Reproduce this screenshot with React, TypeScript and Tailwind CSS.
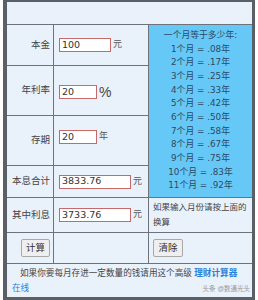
import React from 'react';

const cjk = "font-['Liberation_Sans','Noto_Sans_CJK_SC',sans-serif]";

const rates = ['.08', '.17', '.25', '.33', '.42', '.50', '.58', '.67', '.75', '.83', '.92'];

function Field({ value, width, unit, big }: { value: string; width: string; unit: string; big?: boolean }) {
  return (
    <div className="flex items-center gap-[2px] pl-[5px]">
      <input
        readOnly
        value={value}
        className={`${width} h-[14px] border border-[#c46a6a] bg-white pl-[2px] text-[9.5px] text-[#333] outline-none font-['DejaVu_Sans',sans-serif]`}
      />
      <span className={big ? 'text-[14px] leading-none text-[#444]' : 'text-[9px] text-[#555]'}>{unit}</span>
    </div>
  );
}

function Label({ children }: { children: React.ReactNode }) {
  return <div className="flex items-center justify-end bg-[#e9f1fb] pr-[3px] text-[9.5px] text-[#444]">{children}</div>;
}

export default function App() {
  return (
    <div className={`h-[300px] w-[258px] bg-white px-[3px] ${cjk}`}>
      <div className="border-b-[3px] border-l-4 border-r-[3px] border-t-2 border-[#5b5f66]">
        <div className="grid grid-cols-[46px_94px_1fr] grid-rows-[22px_40px_49px_49px_31px_34px_30px_33px] gap-px bg-[#6e737b]">
          <div className="col-span-3 bg-[#e9f1fb]" />

          <Label>本金</Label>
          <div className="flex items-center bg-[#e9f1fb]">
            <Field value="100" width="w-[52px]" unit="元" />
          </div>
          <div className="row-span-4 bg-[#66c8f6] pt-[4px] text-center font-['DejaVu_Sans','Noto_Sans_CJK_SC',sans-serif] text-[8.8px] leading-[13.65px] text-[#2c4a66]">
            <div>一个月等于多少年:</div>
            {rates.map((r, i) => (
              <div key={i}>
                {i + 1}个月 = {r}年
              </div>
            ))}
          </div>

          <Label>年利率</Label>
          <div className="flex items-center bg-[#e9f1fb] pt-[3px]">
            <Field value="20" width="w-[38px]" unit="%" big />
          </div>

          <Label>存期</Label>
          <div className="flex items-center bg-[#e9f1fb] pb-[7px]">
            <Field value="20" width="w-[38px]" unit="年" />
          </div>

          <Label>本息合计</Label>
          <div className="flex items-center bg-[#e9f1fb]">
            <Field value="3833.76" width="w-[72px]" unit="元" />
          </div>

          <Label>其中利息</Label>
          <div className="flex items-center bg-[#e9f1fb]">
            <Field value="3733.76" width="w-[72px]" unit="元" />
          </div>
          <div className="flex items-center bg-[#e9f1fb] pl-[4px] text-[8.5px] leading-[15px] text-[#444]">
            <div>
              如果输入月份请按上面的
              <br />
              换算
            </div>
          </div>

          <div className="flex items-center justify-end bg-[#e9f1fb] pr-[3px]">
            <button className="h-[18px] w-[29px] rounded-[2px] border border-[#a8a8a8] bg-[#efefef] text-[9.5px] text-[#333]">计算</button>
          </div>
          <div className="bg-[#e9f1fb]" />
          <div className="flex items-center bg-[#e9f1fb] pl-[4px]">
            <button className="h-[18px] w-[30px] rounded-[2px] border border-[#a8a8a8] bg-[#efefef] text-[9.5px] text-[#333]">清除</button>
          </div>

          <div className="col-span-3 whitespace-nowrap bg-[#e9f1fb] pl-[5px] pr-[2px] pt-[2px] text-[8.6px] leading-[15px] text-[#444]">
            <div className="pl-[8px]">
              如果你要每月存进一定数量的钱请用这个高级 <span className="font-bold text-[#2b7fd6]">理财计算器</span>
            </div>
            <div className="flex items-center justify-between">
              <span className="text-[#2b7fd6]">在线</span>
              <span className="text-[6.5px] text-[#999]">头条 @数通光头</span>
            </div>
          </div>
        </div>
      </div>
    </div>
  );
}
